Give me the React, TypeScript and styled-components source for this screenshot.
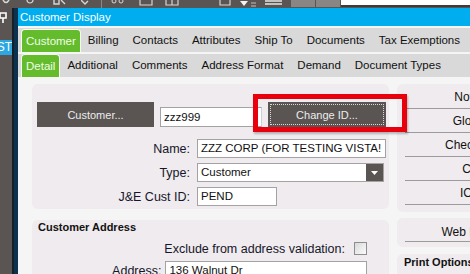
import styled, { createGlobalStyle } from "styled-components";

const Global = createGlobalStyle`
  html, body {
    margin: 0;
    padding: 0;
  }
  body {
    width: 470px;
    height: 274px;
    overflow: hidden;
    background: #5a5552;
    font-family: "Liberation Sans", Arial, sans-serif;
  }
`;

const Screen = styled.div`
  display: flex;
  flex-direction: column;
  width: 470px;
  height: 274px;
  overflow: hidden;
`;

// top toolbar, mostly cropped off
const Toolbar = styled.div`
  display: flex;
  align-items: flex-start;
  height: 8px;
  flex-shrink: 0;
  background: #5a5552;
  overflow: hidden;
`;

const ToolIcon = styled.svg<{ $ml: number }>`
  flex-shrink: 0;
  margin-left: ${(p) => p.$ml}px;
`;

const ToolSep = styled.div<{ $ml: number }>`
  width: 1px;
  height: 8px;
  margin-left: ${(p) => p.$ml}px;
  background: #8c8784;
`;

const ToolButton = styled.div<{ $ml: number }>`
  width: 24px;
  height: 7px;
  margin-left: ${(p) => p.$ml}px;
  background: #8a8684;
`;

const Search = styled.div`
  flex: 1;
  height: 5px;
  margin-left: 1px;
  background: #ffffff;
  border-bottom: 2px solid #3f3b39;
`;

const Body = styled.div`
  display: flex;
  flex: 1;
  min-height: 0;
`;

const SideStrip = styled.div`
  display: flex;
  flex-direction: column;
  width: 12px;
  flex-shrink: 0;
  background: #5a5552;
  overflow: hidden;
`;

const PinIcon = styled.svg`
  margin-top: 4px;
`;

const SideBadge = styled.div`
  margin-top: 17px;
  height: 15px;
  width: 12px;
  background: #2ba7e1;
  color: #ffffff;
  font-size: 12px;
  line-height: 15px;
  display: flex;
  justify-content: flex-end;
  overflow: hidden;
`;

const WindowEdge = styled.div`
  width: 4px;
  flex-shrink: 0;
  background: #0b3350;
  border-left: 2px solid #161e26;
`;

const Window = styled.div`
  flex: 1;
  display: flex;
  flex-direction: column;
  background: #f5f5f5;
  min-width: 0;
`;

const TitleBar = styled.div`
  height: 18px;
  flex-shrink: 0;
  background: #00adef;
  color: #ffffff;
  font-size: 11.5px;
  line-height: 18px;
  padding-left: 2px;
  white-space: nowrap;
`;

const TabStrip = styled.div<{ $h: number }>`
  display: flex;
  align-items: flex-end;
  height: ${(p) => p.$h}px;
  flex-shrink: 0;
  margin-top: 2px;
  padding-left: 3px;
  background: #d9d9d9;
  white-space: nowrap;
  overflow: hidden;
`;

const Tab = styled.div<{ $active?: boolean }>`
  height: ${(p) => (p.$active ? 22 : 23)}px;
  line-height: 22px;
  font-size: 11.5px;
  padding: 0 ${(p) => (p.$active ? 4 : 7)}px;
  color: ${(p) => (p.$active ? "#eefee6" : "#111111")};
  background: ${(p) => (p.$active ? "#64bc2c" : "transparent")};
  border: ${(p) => (p.$active ? "1px solid #f4fbef" : "none")};
  border-bottom: none;
  border-radius: 4px 4px 0 0;
`;

const Content = styled.div`
  flex: 1;
  display: grid;
  grid-template-columns: 357px 140px;
  column-gap: 8px;
  padding: 7px 0 0 14px;
  overflow: hidden;
  min-height: 0;
`;

const Column = styled.div`
  display: flex;
  flex-direction: column;
`;

const Panel = styled.div<{ $h?: number; $gap?: number }>`
  position: relative;
  background: #efebee;
  border-radius: 6px;
  flex-shrink: 0;
  ${(p) => (p.$h ? `height: ${p.$h}px;` : "flex: 1;")}
  margin-bottom: ${(p) => p.$gap ?? 0}px;
  box-sizing: border-box;
`;

const MainPanel = styled(Panel)`
  padding: 18px 0 0 5px;
`;

const IdRow = styled.div`
  display: flex;
  align-items: flex-end;
  gap: 6px;
`;

const DarkButton = styled.div<{ $w: number }>`
  position: relative;
  width: ${(p) => p.$w}px;
  height: 25px;
  box-sizing: border-box;
  background: #5a5553;
  color: #ececec;
  font-size: 11px;
  display: flex;
  align-items: center;
  justify-content: center;
`;

const FocusRing = styled.div`
  position: absolute;
  inset: 2px;
  border: 1px dotted #d8d8d8;
`;

const Highlight = styled.div`
  position: absolute;
  left: -15px;
  top: -8px;
  width: 154px;
  height: 38px;
  box-sizing: border-box;
  border: 5px solid #e8000c;
  box-shadow: 1px 2px 2px rgba(0, 0, 0, 0.25);
  z-index: 2;
`;

const Field = styled.div<{ $w: number }>`
  width: ${(p) => p.$w}px;
  height: 19px;
  box-sizing: border-box;
  background: #ffffff;
  border: 1px solid #a3a3a3;
  font-size: 11.5px;
  line-height: 17px;
  padding-left: 3px;
  color: #111111;
  white-space: nowrap;
  overflow: hidden;
  display: flex;
`;

const IdField = styled(Field)`
  height: 20px;
  line-height: 18px;
  border-right-color: #c8d2dc;
`;

const FieldText = styled.span`
  flex: 1;
  overflow: hidden;
`;

const SelectButton = styled.div`
  width: 17px;
  height: 17px;
  background: #5a5553;
  display: flex;
  align-items: center;
  justify-content: center;
`;

const FormGrid = styled.div`
  display: grid;
  grid-template-columns: 153px auto;
  column-gap: 7px;
  row-gap: 5px;
  margin-top: 12px;
  align-items: center;
`;

const Label = styled.div`
  text-align: right;
  font-size: 12.5px;
  color: #16162a;
  white-space: nowrap;
`;

const AddressPanel = styled(Panel)`
  padding: 0 22px 0 6px;
`;

const PanelTitle = styled.div`
  font-size: 11px;
  font-weight: bold;
  color: #111111;
  line-height: 14px;
  white-space: nowrap;
`;

const ExcludeRow = styled.div`
  display: flex;
  justify-content: flex-end;
  align-items: center;
  gap: 9px;
  margin-top: 7px;
  height: 15px;
`;

const CheckBox = styled.div`
  width: 13px;
  height: 13px;
  box-sizing: border-box;
  border: 1px solid #8e8e8e;
  background: linear-gradient(135deg, #d9d9d9, #fbfbfb);
`;

const AddressRow = styled.div`
  display: flex;
  align-items: center;
  gap: 4px;
  margin-top: 5px;
`;

const AddressLabel = styled(Label)`
  width: 125px;
`;

const SidePanel = styled(Panel)<{ $pt: number }>`
  padding: ${(p) => p.$pt}px 0 0 8px;
`;

const SideButton = styled.div<{ $h: number }>`
  width: 130px;
  height: ${(p) => p.$h}px;
  border-bottom: 1px solid #9b9b9b;
  font-size: 12px;
  color: #111111;
  display: flex;
  align-items: center;
  justify-content: center;
  white-space: nowrap;
`;

const PrintTitle = styled(PanelTitle)`
  padding: 1px 0 0 7px;
`;

const sideButtons = ["Notes", "Global", "Checking", "Co", "ICP"];

function App() {
  return (
    <Screen>
      <Global />
      <Toolbar>
        <ToolIcon $ml={2} width="8" height="8" viewBox="0 0 8 8">
          <path d="M1 0 Q4 5 7 0" stroke="#d6d6d6" strokeWidth="1.5" fill="none" />
        </ToolIcon>
        <ToolIcon $ml={16} width="8" height="8" viewBox="0 0 8 8">
          <path d="M1 0 A3 3 0 0 0 7 0" stroke="#d6d6d6" strokeWidth="1.2" fill="none" />
        </ToolIcon>
        <ToolIcon $ml={19} width="14" height="8" viewBox="0 0 14 8">
          <path d="M1 0 V4 H6 V0 M8 0 L12 4" stroke="#d6d6d6" strokeWidth="1.4" fill="none" />
        </ToolIcon>
        <ToolIcon $ml={14} width="8" height="8" viewBox="0 0 8 8">
          <path d="M0 0 L4 4 L7 1" stroke="#d6d6d6" strokeWidth="1.4" fill="none" />
        </ToolIcon>
        <ToolSep $ml={12} />
        <ToolIcon $ml={9} width="14" height="8" viewBox="0 0 14 8">
          <circle cx="3" cy="1" r="2" stroke="#d6d6d6" fill="none" />
          <circle cx="10" cy="1" r="2" stroke="#d6d6d6" fill="none" />
        </ToolIcon>
        <ToolIcon $ml={14} width="14" height="8" viewBox="0 0 14 8">
          <path d="M1 0 V5 H13 V0" stroke="#d6d6d6" strokeWidth="1.2" fill="none" />
        </ToolIcon>
        <ToolIcon $ml={12} width="14" height="8" viewBox="0 0 14 8">
          <path d="M1 0 V5 H13 V0 M7 0 V5" stroke="#d6d6d6" strokeWidth="1.2" fill="none" />
        </ToolIcon>
        <ToolIcon $ml={40} width="12" height="8" viewBox="0 0 12 8">
          <path d="M1 0 V5 H11 V0" stroke="#d6d6d6" strokeWidth="1.2" fill="none" />
        </ToolIcon>
        <ToolIcon $ml={9} width="8" height="8" viewBox="0 0 8 8">
          <path d="M0 1 H8 L4 6 Z" fill="#f2f2f2" />
        </ToolIcon>
        <ToolIcon $ml={3} width="6" height="8" viewBox="0 0 6 8">
          <path d="M0 3 H5 M0 6 H5" stroke="#bdbdbd" strokeWidth="1" />
        </ToolIcon>
        <ToolIcon $ml={8} width="18" height="8" viewBox="0 0 18 8">
          <path d="M0 1 H17 M0 4 H17" stroke="#e6e6e6" strokeWidth="1.5" />
        </ToolIcon>
        <ToolButton $ml={8} />
        <ToolButton $ml={1} />
        <Search />
      </Toolbar>
      <Body>
        <SideStrip>
          <PinIcon width="7" height="11" viewBox="0 0 7 11">
            <path d="M0 1 H6 V6 H0 Z M3 6 V11" stroke="#ffffff" strokeWidth="1.6" fill="none" />
          </PinIcon>
          <SideBadge>ST</SideBadge>
        </SideStrip>
        <WindowEdge />
        <Window>
          <TitleBar>Customer Display</TitleBar>
          <TabStrip $h={24}>
            <Tab $active>Customer</Tab>
            <Tab>Billing</Tab>
            <Tab>Contacts</Tab>
            <Tab>Attributes</Tab>
            <Tab>Ship To</Tab>
            <Tab>Documents</Tab>
            <Tab>Tax Exemptions</Tab>
          </TabStrip>
          <TabStrip $h={23}>
            <Tab $active>Detail</Tab>
            <Tab>Additional</Tab>
            <Tab>Comments</Tab>
            <Tab>Address Format</Tab>
            <Tab>Demand</Tab>
            <Tab>Document Types</Tab>
          </TabStrip>
          <Content>
            <Column>
              <MainPanel $h={125} $gap={11}>
                <IdRow>
                  <DarkButton $w={117}>Customer...</DarkButton>
                  <IdField $w={102}>zzz999</IdField>
                  <DarkButton $w={118}>
                    <FocusRing />
                    Change ID...
                    <Highlight />
                  </DarkButton>
                </IdRow>
                <FormGrid>
                  <Label>Name:</Label>
                  <Field $w={189}>ZZZ CORP (FOR TESTING VISTA!</Field>
                  <Label>Type:</Label>
                  <Field $w={187}>
                    <FieldText>Customer</FieldText>
                    <SelectButton>
                      <svg width="7" height="4" viewBox="0 0 7 4">
                        <path d="M0 0 H7 L3.5 4 Z" fill="#ffffff" />
                      </svg>
                    </SelectButton>
                  </Field>
                  <Label>J&amp;E Cust ID:</Label>
                  <Field $w={80}>PEND</Field>
                </FormGrid>
              </MainPanel>
              <AddressPanel>
                <PanelTitle>Customer Address</PanelTitle>
                <ExcludeRow>
                  <Label>Exclude from address validation:</Label>
                  <CheckBox />
                </ExcludeRow>
                <AddressRow>
                  <AddressLabel>Address:</AddressLabel>
                  <Field $w={204}>136 Walnut Dr</Field>
                </AddressRow>
              </AddressPanel>
            </Column>
            <Column>
              <SidePanel $h={128} $gap={6} $pt={1}>
                {sideButtons.map((b) => (
                  <SideButton key={b} $h={23}>
                    {b}
                  </SideButton>
                ))}
              </SidePanel>
              <SidePanel $h={29} $gap={7} $pt={4}>
                <SideButton $h={19}>Web Login</SideButton>
              </SidePanel>
              <Panel>
                <PrintTitle>Print Options</PrintTitle>
              </Panel>
            </Column>
          </Content>
        </Window>
      </Body>
    </Screen>
  );
}

export default App;
